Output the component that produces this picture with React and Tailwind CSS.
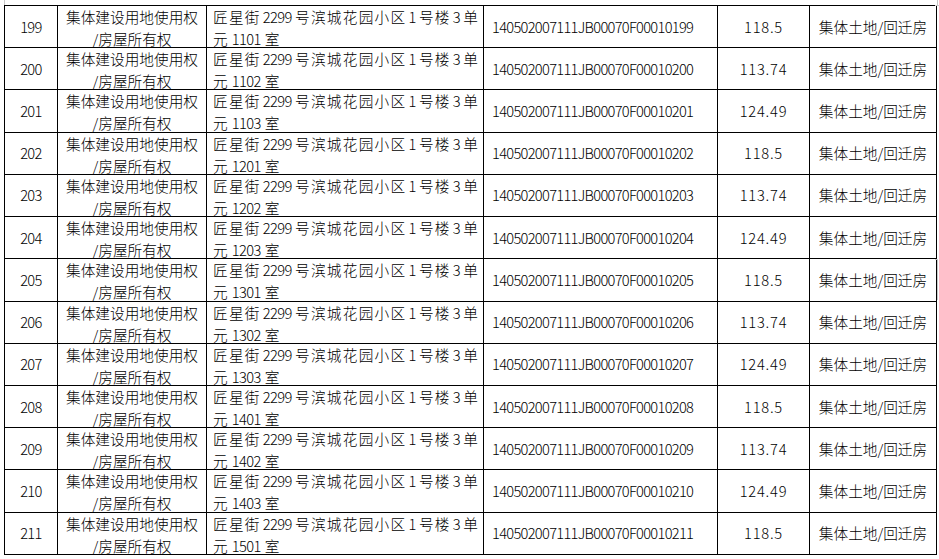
import React from 'react';

const ID_PREFIX = '140502007111JB00070F00010';

const rows = [
  [199, '1101', '118.5'],
  [200, '1102', '113.74'],
  [201, '1103', '124.49'],
  [202, '1201', '118.5'],
  [203, '1202', '113.74'],
  [204, '1203', '124.49'],
  [205, '1301', '118.5'],
  [206, '1302', '113.74'],
  [207, '1303', '124.49'],
  [208, '1401', '118.5'],
  [209, '1402', '113.74'],
  [210, '1403', '124.49'],
  [211, '1501', '118.5'],
];

const firstLine = ['匠', '星', '街', '2299', '号', '滨', '城', '花', '园', '小', '区', '1', '号', '楼', '3', '单'];

const Num = ({ children, className = '' }) => (
  <span className={`tracking-[-0.6px] ${className}`}>{children}</span>
);

const Address = ({ room }) => (
  <div className="h-[40px] leading-[22px] pl-[6px]">
    <div className="flex justify-between w-[265px]">
      {firstLine.map((t, i) => (
        <span key={i} className={/\d/.test(t) ? 'tracking-[-0.6px] mx-[2px]' : ''}>{t}</span>
      ))}
    </div>
    <div className="flex">
      <span>元</span>
      <Num className="mx-[4px]">{room}</Num>
      <span>室</span>
    </div>
  </div>
);

const Row = ({ no, room, area }) => (
  <tr className="h-[42.23px]">
    <td className="border border-black text-center align-middle">
      <Num>{no}</Num>
    </td>
    <td className="border border-black text-center align-top p-0">
      <div className="h-[40px] leading-[22px]">
        <div>集体建设用地使用权</div>
        <div>/房屋所有权</div>
      </div>
    </td>
    <td className="border border-black align-top p-0">
      <Address room={room} />
    </td>
    <td className="border border-black align-middle pl-[8px]">
      <span className="tracking-[-0.7px]">{ID_PREFIX + no}</span>
    </td>
    <td className="border border-black text-center align-middle">
      <span className="tracking-[0.8px]">{area}</span>
    </td>
    <td className="border border-black text-center align-middle">集体土地/回迁房</td>
  </tr>
);

export default function App() {
  return (
    <div className="relative w-[939px] h-[559px] bg-white overflow-hidden text-black font-['Noto_Sans_CJK_SC',sans-serif] text-[14.67px] font-light">
      <div className="absolute left-[4px] top-0 w-px h-[5px] bg-[#c8c8c8]" />
      <div className="absolute left-[935px] top-[5px] w-[4px] h-px bg-[#c8c8c8]" />
      <div className="absolute left-[937px] top-0 w-px h-[5px] bg-[#c8c8c8]" />
      <div className="absolute left-[935px] top-[259px] w-[3px] h-px bg-[#c8c8c8]" />
      <div className="absolute left-[937px] top-[259px] w-px h-[41px] bg-[#c8c8c8]" />

      <div className="pt-[5px] pl-[4px]">
        <table className="table-fixed border-collapse w-[932px]">
          <colgroup>
            <col className="w-[53px]" />
            <col className="w-[149px]" />
            <col className="w-[277px]" />
            <col className="w-[234px]" />
            <col className="w-[92px]" />
            <col className="w-[127px]" />
          </colgroup>
          <tbody>
            {rows.map(([no, room, area]) => (
              <Row key={no} no={no} room={room} area={area} />
            ))}
          </tbody>
        </table>
      </div>
    </div>
  );
}
